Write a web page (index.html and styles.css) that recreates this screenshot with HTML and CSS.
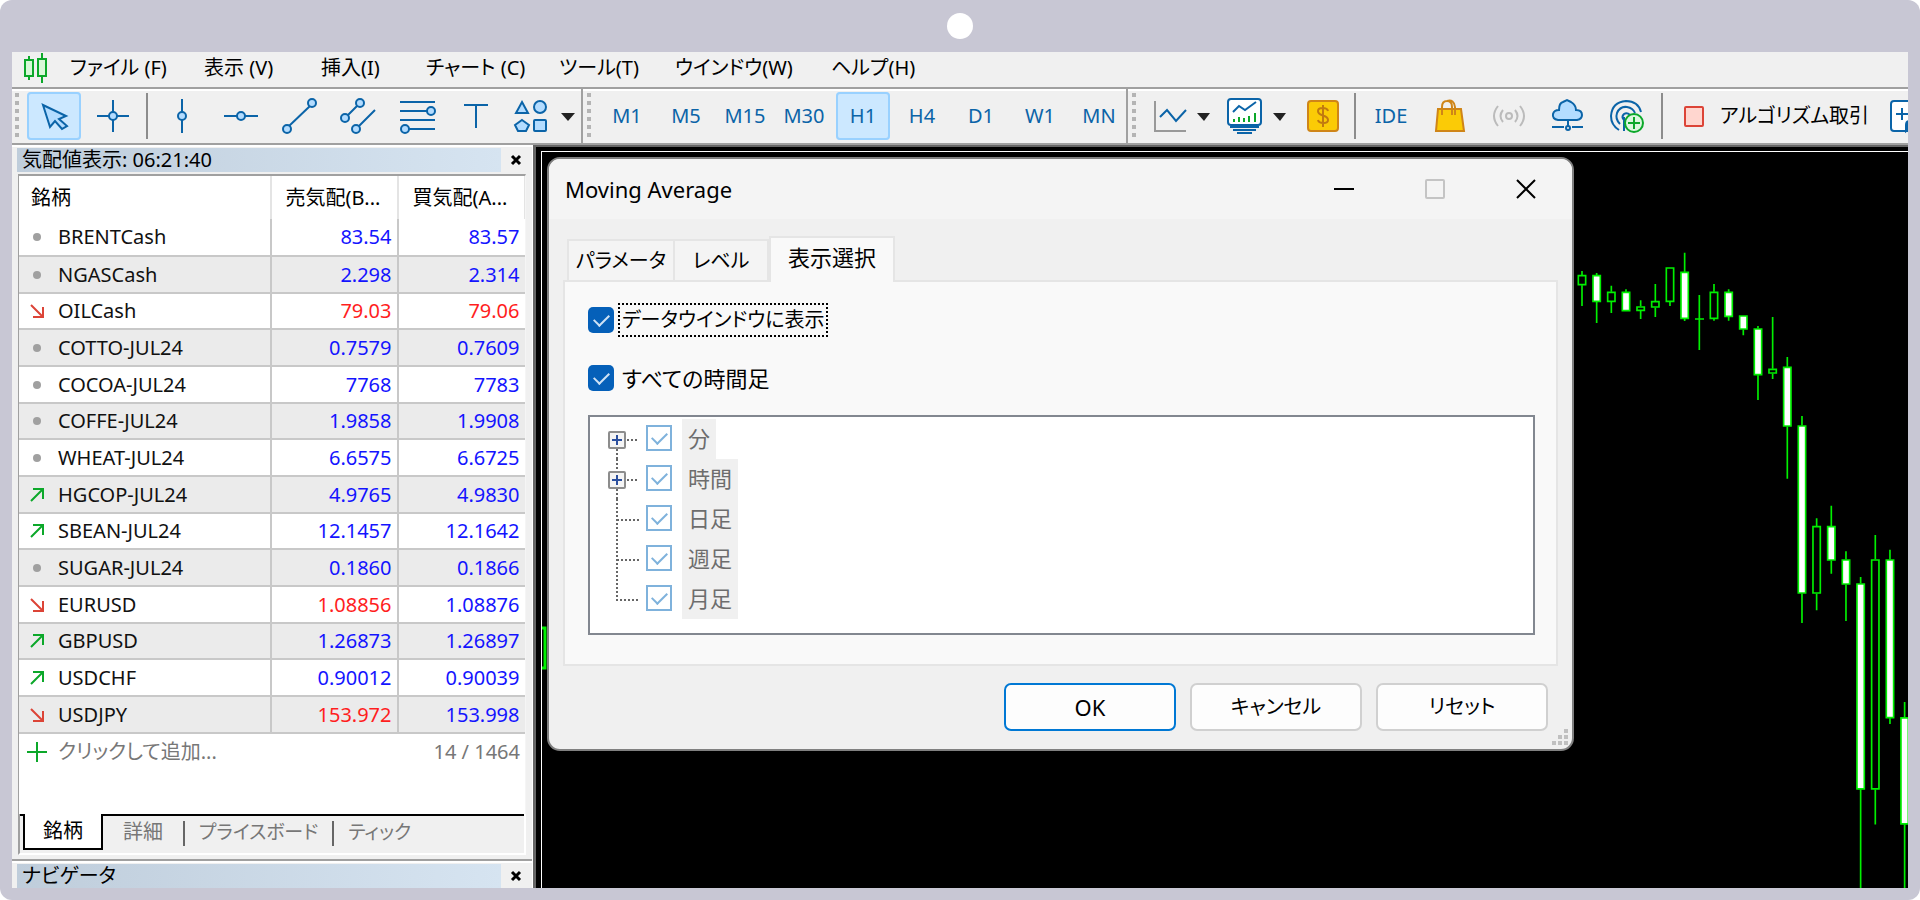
FILE: index.html
```html
<!DOCTYPE html>
<html lang="ja">
<head>
<meta charset="utf-8">
<title>Moving Average</title>
<link rel="stylesheet" href="styles.css">
</head>
<body>
<div class="device">
  <div class="camera-bar"><span class="camera"></span></div>
  <div class="app">
    <nav class="menubar">
      <svg class="logo" width="24" height="30" viewBox="0 0 24 30" fill="#d8f8d8" stroke="#0ca82a" stroke-width="2"><path d="M5 3v24M18 0v30"/><rect x="1" y="7" width="8" height="16"/><rect x="14" y="6" width="8" height="17"/></svg>
      <div class="menus">
        <button>ファイル (F)</button><button>表示 (V)</button><button>挿入(I)</button><button>チャート (C)</button><button>ツール(T)</button><button>ウインドウ(W)</button><button>ヘルプ(H)</button>
      </div>
    </nav>

    <div class="toolbar">
      <div class="group">
        <span class="handle"></span>
        <button class="tool active" aria-label="カーソル"><svg viewBox="0 0 54 48"><path class="fill" d="M16 13l23 11-7 3 8 7-5 3-7-8-5 6z"/></svg></button>
        <button class="tool" aria-label="十字線"><svg viewBox="0 0 54 48"><path d="M11 24h12M31 24h12M27 8v12M27 28v12"/><circle class="fill" cx="27" cy="24" r="4"/></svg></button>
        <span class="divider"></span>
        <button class="tool" aria-label="垂直線"><svg viewBox="0 0 54 48"><path d="M27 7v13M27 28v13"/><circle class="fill" cx="27" cy="24" r="4"/></svg></button>
        <button class="tool" aria-label="水平線"><svg viewBox="0 0 54 48"><path d="M10 24h13M31 24h13"/><circle class="fill" cx="27" cy="24" r="4"/></svg></button>
        <button class="tool" aria-label="トレンドライン"><svg viewBox="0 0 54 48"><path d="M16 34L37 14"/><circle class="fill" cx="14" cy="37" r="4"/><circle class="fill" cx="39" cy="11" r="4"/></svg></button>
        <button class="tool" aria-label="チャネル"><svg viewBox="0 0 54 48"><path d="M16 23L25 14M27 34L43 18"/><circle class="fill" cx="13" cy="26" r="4"/><circle class="fill" cx="28" cy="11" r="4"/><circle class="fill" cx="24" cy="37" r="4"/></svg></button>
        <button class="tool" aria-label="フィボナッチ"><svg viewBox="0 0 54 48"><path d="M9 10h35M9 19h27M9 28h35M18 37h26"/><circle class="fill" cx="40" cy="19" r="4"/><circle class="fill" cx="14" cy="37" r="4"/></svg></button>
        <button class="tool" aria-label="テキスト"><svg viewBox="0 0 54 48"><path d="M14 13h24M26 13v23"/></svg></button>
        <button class="tool" aria-label="図形"><svg viewBox="0 0 54 48"><path class="fill" d="M13 10l6 11H7zM13 28l7 5-3 6h-8l-3-6z"/><circle class="fill" cx="31" cy="15" r="6"/><rect class="fill" x="25" y="28" width="12" height="11" rx="1"/></svg></button>
        <button class="drop" aria-label="図形メニュー"><svg viewBox="0 0 14 48"><path d="M0 21h14l-7 8z"/></svg></button>
      </div>
      <div class="group">
        <span class="handle"></span>
        <button class="tool">M1</button><button class="tool">M5</button><button class="tool">M15</button><button class="tool">M30</button><button class="tool active">H1</button><button class="tool">H4</button><button class="tool">D1</button><button class="tool">W1</button><button class="tool">MN</button>
      </div>
      <div class="group last">
        <span class="handle"></span>
        <button class="tool" aria-label="ライン"><svg viewBox="0 0 54 48"><path stroke="#999" d="M14 9v30h31"/><path d="M19 25l7-7 9 11 10-11"/></svg></button>
        <button class="drop" aria-label="チャート種類"><svg viewBox="0 0 14 48"><path d="M1 21h13l-6 8z"/></svg></button>
        <button class="tool" aria-label="インディケータ"><svg viewBox="0 0 54 48"><rect x="11" y="7" width="33" height="26" rx="3" fill="#fff"/><path d="M13 35h29M16 38h23M20 41h15"/><path d="M16 20l6-6 6 4 11-8"/><path stroke="#0ca82a" d="M17 30v-3M22 30v-5M27 30v-4M32 30v-6M38 30v-9"/></svg></button>
        <button class="drop" aria-label="インディケータ一覧"><svg viewBox="0 0 14 48"><path d="M1 21h13l-6 8z"/></svg></button>
        <button class="tool" aria-label="注文"><svg viewBox="0 0 54 48"><rect x="15" y="9" width="30" height="30" rx="3" fill="#fbcb06" stroke="#cf8518"/><path stroke="#c17a10" d="M35 19c-1-4-10-4-10 0 0 6 10 3 10 9 0 4-9 4-10 0M30 13v22"/></svg></button>
        <span class="divider"></span>
        <button class="tool">IDE</button>
        <button class="tool" aria-label="マーケット"><svg viewBox="0 0 54 48"><path fill="#fbcb06" stroke="#cf8518" d="M15 17h23l3 22H13z"/><path stroke="#cf8518" d="M19 23V15q0-6 5-6t5 6v8M24 9q7-2 8 6v8"/></svg></button>
        <button class="tool" aria-label="シグナル"><svg viewBox="0 0 54 48"><g stroke="#bbb"><circle cx="27" cy="24" r="3"/><path d="M21 18q-5 6 0 12M33 18q5 6 0 12M16 14q-8 10 0 20M38 14q8 10 0 20"/></g></svg></button>
        <button class="tool" aria-label="VPS"><svg viewBox="0 0 54 48"><path class="fill" d="M17 28q-6-1-5-6 1-4 6-4 0-7 4-8l4-2 4 2q5 3 5 8 6 0 6 5 0 4-5 5z"/><path d="M27 28v7M11 35h12M31 35h11"/><circle cx="27" cy="36" r="2"/></svg></button>
        <button class="tool" aria-label="コミュニティ"><svg viewBox="0 0 54 48"><path d="M19 38q-8-5-8-14 1-14 15-15 12 0 15 11M20 32q-5-5-3-11 3-7 10-6 6 1 8 6M24 28q-3-3 0-6 3-2 6 1M24 25v14"/><circle cx="34" cy="31" r="9" stroke="#0ca82a" fill="#dcf7df"/><path stroke="#0ca82a" d="M28 31h12M34 25v12"/></svg></button>
        <span class="divider"></span>
        <button class="algo"><span class="stop"></span>アルゴリズム取引</button>
        <button class="tool" aria-label="新規注文"><svg viewBox="0 0 54 48"><path d="M30 39H14q-3 0-3-3V12q0-3 3-3h24v20z" fill="#fff"/><path d="M16 22h12M22 16v12"/><path d="M26 39V33q0-4 4-4h8z" fill="#0b64a8"/></svg></button>
      </div>
    </div>

    <div class="workspace">
      <aside class="sidebar">
        <section class="pane">
          <header class="pane-title"><h2>気配値表示: 06:21:40</h2><button aria-label="閉じる"><svg width="12" height="12" viewBox="0 0 12 12"><path d="M2 2l8 8M10 2l-8 8"/></svg></button></header>
          <div class="watch">
            <table>
              <colgroup><col class="c-name"><col class="c-num"><col class="c-num"></colgroup>
              <thead><tr><th>銘柄</th><th>売気配(B...</th><th>買気配(A...</th></tr></thead>
              <tbody>
                <tr><td><i class="dot"></i>BRENTCash</td><td>83.54</td><td>83.57</td></tr>
                <tr><td><i class="dot"></i>NGASCash</td><td>2.298</td><td>2.314</td></tr>
                <tr><td><svg class="down" viewBox="0 0 14 14"><path d="M1 1l11 11M13 3v10H3"/></svg>OILCash</td><td class="red">79.03</td><td class="red">79.06</td></tr>
                <tr><td><i class="dot"></i>COTTO-JUL24</td><td>0.7579</td><td>0.7609</td></tr>
                <tr><td><i class="dot"></i>COCOA-JUL24</td><td>7768</td><td>7783</td></tr>
                <tr><td><i class="dot"></i>COFFE-JUL24</td><td>1.9858</td><td>1.9908</td></tr>
                <tr><td><i class="dot"></i>WHEAT-JUL24</td><td>6.6575</td><td>6.6725</td></tr>
                <tr><td><svg class="up" viewBox="0 0 14 14"><path d="M1 13L12 2M3 1h10v10"/></svg>HGCOP-JUL24</td><td>4.9765</td><td>4.9830</td></tr>
                <tr><td><svg class="up" viewBox="0 0 14 14"><path d="M1 13L12 2M3 1h10v10"/></svg>SBEAN-JUL24</td><td>12.1457</td><td>12.1642</td></tr>
                <tr><td><i class="dot"></i>SUGAR-JUL24</td><td>0.1860</td><td>0.1866</td></tr>
                <tr><td><svg class="down" viewBox="0 0 14 14"><path d="M1 1l11 11M13 3v10H3"/></svg>EURUSD</td><td class="red">1.08856</td><td>1.08876</td></tr>
                <tr><td><svg class="up" viewBox="0 0 14 14"><path d="M1 13L12 2M3 1h10v10"/></svg>GBPUSD</td><td>1.26873</td><td>1.26897</td></tr>
                <tr><td><svg class="up" viewBox="0 0 14 14"><path d="M1 13L12 2M3 1h10v10"/></svg>USDCHF</td><td>0.90012</td><td>0.90039</td></tr>
                <tr><td><svg class="down" viewBox="0 0 14 14"><path d="M1 1l11 11M13 3v10H3"/></svg>USDJPY</td><td class="red">153.972</td><td>153.998</td></tr>
              </tbody>
            </table>
            <div class="add-row"><button><svg width="20" height="20" viewBox="0 0 20 20"><path d="M0 10h20M10 0v20"/></svg>クリックして追加...</button><span>14 / 1464</span></div>
          </div>
          <div class="pane-tabs"><button class="on">銘柄</button><button>詳細</button><button class="ruled">プライスボード</button><button class="ruled">ティック</button></div>
        </section>
        <section class="pane next">
          <header class="pane-title"><h2>ナビゲータ</h2><button aria-label="閉じる"><svg width="12" height="12" viewBox="0 0 12 12"><path d="M2 2l8 8M10 2l-8 8"/></svg></button></header>
        </section>
      </aside>

      <main class="chart">
        <div class="plot">
          <svg class="candles" fill="none" stroke="#00f000" stroke-width="5">
            <path stroke-width="3" d="M0 476h3v40h-3"/>
            <g transform="translate(1018 88) scale(.3333)">
              <path d="M66 93v12M66 136v62M110 99v6M110 186v63M154 137v18M154 186v33M198 148v7M242 181v18M242 213v24M286 132v51M286 203v28M330 186v12M374 38v57M374 237v6M418 165v165M462 132v23M462 237v5M506 148v7M506 231v11M550 269v17M594 258v7M594 406v74M638 231v155M638 401v16M682 351v29M682 560v156M726 528v28M726 1061v88M770 835v23M770 1061v50M814 797v61M814 962v39M858 934v24M858 1034v109M902 1011v19M902 1649v400M946 885v73M946 1649v105M990 929v29M990 1435v17M1034 1386v46M1034 1754v300"/>
              <path d="M55 107h22v27h-22zM143 157h22v27h-22zM231 201h22v10h-22zM275 185h22v16h-22zM319 84h22v100h-22zM405 237h27M451 157h22v78h-22zM627 388h22v11h-22zM759 860h22v199h-22zM935 960h22v687h-22z"/>
              <path fill="#fff" d="M99 107h22v77h-22zM187 157h22v55h-22zM363 97h22v138h-22zM495 157h22v72h-22zM539 228h22v39h-22zM583 267h22v137h-22zM671 382h22v176h-22zM715 558h22v501h-22zM803 860h22v100h-22zM847 960h22v72h-22zM891 1032h22v615h-22zM979 960h22v473h-22zM1023 1434h22v318h-22z"/>
            </g>
          </svg>

          <div class="dialog" role="dialog" aria-labelledby="dlg-title">
            <header class="dialog-title">
              <h1 id="dlg-title">Moving Average</h1>
              <div class="win-controls">
                <button aria-label="最小化"><svg viewBox="0 0 20 20"><path d="M0 10h20"/></svg></button>
                <button aria-label="最大化" disabled><svg viewBox="0 0 20 20"><rect x="1" y="1" width="18" height="18" rx="1"/></svg></button>
                <button aria-label="閉じる"><svg viewBox="0 0 20 20"><path d="M1 1l18 18M19 1L1 19"/></svg></button>
              </div>
            </header>
            <div class="dialog-body">
              <div class="tabs" role="tablist"><button role="tab">パラメータ</button><button role="tab">レベル</button><button role="tab" aria-selected="true" class="on">表示選択</button></div>
              <div class="tab-panel">
                <div class="check"><input type="checkbox" id="c1" checked><label for="c1" class="focus">データウインドウに表示</label></div>
                <div class="check"><input type="checkbox" id="c2" checked><label for="c2">すべての時間足</label></div>
                <ul class="tree">
                  <li><button class="branch" aria-label="分を展開"><svg viewBox="0 0 48 40"><path class="dots" d="M29 21h12M19 30v10"/><rect x="11" y="13" width="16" height="16" rx="1"/><path class="plus" d="M14 21h10M19 16v10"/></svg></button><input type="checkbox" id="t1" checked disabled><label for="t1">分</label></li>
                  <li><button class="branch" aria-label="時間を展開"><svg viewBox="0 0 48 40"><path class="dots" d="M29 21h12M19 0v11M19 30v10"/><rect x="11" y="13" width="16" height="16" rx="1"/><path class="plus" d="M14 21h10M19 16v10"/></svg></button><input type="checkbox" id="t2" checked disabled><label for="t2">時間</label></li>
                  <li><span class="branch"><svg viewBox="0 0 48 40"><path class="dots" d="M19 0v40M19 21h22"/></svg></span><input type="checkbox" id="t3" checked disabled><label for="t3">日足</label></li>
                  <li><span class="branch"><svg viewBox="0 0 48 40"><path class="dots" d="M19 0v40M19 21h22"/></svg></span><input type="checkbox" id="t4" checked disabled><label for="t4">週足</label></li>
                  <li><span class="branch"><svg viewBox="0 0 48 40"><path class="dots" d="M19 0v21h22"/></svg></span><input type="checkbox" id="t5" checked disabled><label for="t5">月足</label></li>
                </ul>
              </div>
              <footer class="actions"><button class="primary">OK</button><button>キャンセル</button><button>リセット</button></footer>
            </div>
            <svg class="grip" width="16" height="16" viewBox="0 0 16 16"><path d="M12 0h4v4h-4zM6 6h4v4H6zM12 6h4v4h-4zM0 12h4v4H0zM6 12h4v4H6zM12 12h4v4h-4z"/></svg>
          </div>
        </div>
      </main>
    </div>
  </div>
</div>
</body>
</html>
```
FILE: styles.css
```css
* { box-sizing: border-box; }
body {
  margin: 0;
  background: #fff;
  color: #000;
  font: 20px/24px "Noto Sans", "Noto Sans CJK JP", sans-serif;
  font-feature-settings: "palt";
}
button {
  padding: 0;
  border: 0;
  background: none;
  color: inherit;
  font: inherit;
  font-feature-settings: inherit;
  white-space: nowrap;
}
h1, h2 { margin: 0; font-size: 22px; font-weight: 400; }

.device {
  display: flex;
  flex-direction: column;
  height: 100vh;
  padding: 0 12px 12px;
  border-radius: 12px;
  background: #c8c7d4;
}
.camera-bar { display: flex; flex: 0 0 52px; align-items: center; justify-content: center; }
.camera { width: 26px; height: 26px; border-radius: 50%; background: #fff; }
.app { display: flex; flex: 1; flex-direction: column; min-height: 0; overflow: hidden; background: #f0f0f0; }

/* menu */
.menubar { display: flex; flex: 0 0 35px; align-items: center; padding: 0 0 4px 12px; }
.menus { display: grid; grid-template-columns: 134px 117px 105px 133px 116px 156px auto; margin-left: 22px; }
.menus button { text-align: left; }

/* toolbar */
.toolbar {
  display: flex;
  flex: 0 0 58px;
  border-top: 2px solid #a0a0a0;
  border-bottom: 2px solid #a0a0a0;
  box-shadow: inset 0 2px #fff;
  overflow: hidden;
  color: #0b64a8;
}
.group { display: flex; flex: none; align-items: center; gap: 5px; padding: 0 6px 0 3px; border-right: 2px solid #a0a0a0; }
.group + .group { padding: 0 0 0 4px; }
.group.last { flex: 1; min-width: 0; border: 0; }
.handle {
  flex: 0 0 4px;
  height: 46px;
  margin-right: 3px;
  background: repeating-linear-gradient(#b4b4b4 0 4px, transparent 4px 8px);
}
.group + .group .handle { margin-right: 4px; }
.group.last .handle { margin-right: 0; }
.tool { flex: 0 0 54px; height: 48px; border-radius: 4px; }
.tool.active { background: #cce8ff; box-shadow: inset 0 0 0 2px #99d1ff; }
.tool svg { display: block; width: 54px; height: 48px; fill: none; stroke: #0b64a8; stroke-width: 2; }
.fill { fill: #b3dcff; }
.divider { flex: 0 0 2px; height: 46px; margin: 0 2px 0 1px; background: #8c8c8c; }
.last .divider { margin: 0 3px 0 2px; }
.drop { flex: 0 0 14px; margin-left: -7px; }
.last .drop { margin: 0 2px 0 -4px; }
.drop svg { display: block; width: 14px; height: 48px; fill: #222; }
.algo { display: flex; flex: 0 0 204px; align-items: center; gap: 16px; padding-left: 13px; color: #000; }
.stop { width: 20px; height: 21px; border: 2px solid #dc4437; border-radius: 2px; background: #ffd6cf; }

/* workspace */
.workspace { display: flex; flex: 1; min-height: 0; }
.sidebar { display: flex; flex: 0 0 521px; flex-direction: column; border-right: 1px solid #fff; box-shadow: inset 0 2px #fff; }
.pane { padding: 3px 5px 0; }
.pane-title { display: grid; grid-template-columns: 1fr 26px; align-items: center; height: 24px; }
.pane-title h2 { padding: 0 5px; background: linear-gradient(90deg, #bfcddb, #d6e4f1); font-size: 20px; white-space: nowrap; }
.pane-title button { display: flex; justify-content: flex-end; padding-right: 5px; }
.pane-title path { stroke: #000; stroke-width: 3; }
.watch { height: 640px; margin: 2px 1px 0; border: solid #a0a0a0; border-width: 2px 0 0 1px; border-right: 1px solid #f5f5f5; background: #fff; }
table { width: 100%; table-layout: fixed; border-collapse: collapse; }
.c-num { width: 127px; }
th { height: 43px; padding: 0 0 0 12px; border-right: 2px solid #e4e4e4; font-weight: 400; text-align: left; white-space: nowrap; }
th + th { padding-left: 14px; }
th:last-child { border-right-width: 1px; }
td { height: 37px; padding: 0 5px 0 0; border-bottom: 2px solid #c8c8c8; color: #1414ff; text-align: right; }
tr:nth-child(3n) td { height: 36px; }
td + td { border-left: 2px solid #c8c8c8; }
td:first-child { padding-left: 10px; color: #111; text-align: left; }
tbody tr:nth-child(even) { background: #ebebeb; }
td.red { color: #ff1e1e; }
.dot { display: inline-block; width: 8px; height: 8px; margin: 0 17px 3px 4px; border-radius: 50%; background: #a0a0a0; }
.up, .down { width: 14px; height: 14px; margin: 0 14px 0 1px; fill: none; stroke: #0ca82a; stroke-width: 2; vertical-align: 0; }
.down { stroke: #dc4437; }
.add-row { display: flex; align-items: center; justify-content: space-between; height: 36px; padding: 0 5px 0 8px; color: #777; }
.add-row button { display: flex; align-items: center; gap: 11px; }
.add-row path { stroke: #0ca82a; stroke-width: 2; }
.pane-tabs { display: flex; height: 41px; margin: 0 1px; padding-left: 3px; border-left: 2px solid #a0a0a0; border-right: 2px solid #fff; border-bottom: 2px solid #fff; box-shadow: inset 0 2px #000; color: #777; }
.pane-tabs button { height: 36px; padding: 0 20px; }
.pane-tabs .on { padding: 0 18px; border: 2px solid #000; border-top: 0; background: #fff; color: #000; }
.pane-tabs .ruled { position: relative; padding: 0 14px 0 16px; font-size: 19px; }
.pane-tabs .ruled::before { content: ""; position: absolute; left: 0; top: 7px; width: 2px; height: 25px; background: #666; }
.next { flex: 1; margin-top: 4px; border-top: 2px solid #a0a0a0; box-shadow: inset 0 2px #fff; }

/* chart */
.chart { flex: 1; min-width: 0; padding: 4px 0 0 5px; border: solid #666; border-width: 2px 0 0 3px; background: #000; }
.plot { position: relative; height: 100%; border: solid #fff; border-width: 1px 0 0 1px; background: #000; }
.candles { position: absolute; left: 0; top: 0; width: 100%; height: 100%; }

/* dialog */
.dialog { position: absolute; left: 5px; top: 5px; width: 1027px; border: 2px solid #808080; border-radius: 13px; background: #f0f0f0; overflow: hidden; }
.dialog-title { display: flex; align-items: center; justify-content: space-between; height: 60px; padding: 0 36px 0 16px; background: #f4f4f4; }
.win-controls { display: flex; gap: 71px; }
.win-controls svg { display: block; width: 20px; height: 20px; fill: none; stroke: #000; stroke-width: 2; }
.win-controls button:disabled svg { stroke: #c4c4c4; }
.dialog-body { padding: 17px 14px 18px; }
.tabs { display: flex; align-items: flex-end; padding-left: 4px; }
.tabs button { width: 108px; height: 41px; border: 2px solid #e5e5e5; border-bottom: 0; background: #f4f4f4; }
.tabs button + button { width: 94px; border-left: 0; }
.tabs button.on { width: 126px; height: 46px; margin-bottom: -2px; padding-bottom: 6px; border-left: 2px solid #e5e5e5; background: #f9f9f9; font-size: 22px; z-index: 1; }
.tab-panel { padding: 21px 21px 29px 23px; border: 2px solid #e5e5e5; background: #f9f9f9; }
.check { display: flex; align-items: center; gap: 4px; height: 34px; margin-bottom: 24px; }
.check label { padding: 0 2px; border: 2px solid transparent; font-size: 22px; line-height: 30px; }
.check .focus { border: 2px dotted #000; font-size: 20px; }
input[type="checkbox"] { display: grid; place-items: center; flex: none; appearance: none; width: 26px; height: 26px; margin: 0; border-radius: 5px; background: #0560b9; }
input[type="checkbox"]::before { content: ""; width: 13px; height: 7px; margin-bottom: 4px; border: solid #cfe2f5; border-width: 0 0 2px 2px; transform: rotate(-45deg); }
.tree { height: 220px; margin: -4px 0 0; padding: 2px 0 0 8px; border: 2px solid #828790; background: #fff; list-style: none; }
.tree li { display: flex; height: 40px; }
.branch, .branch svg { display: block; width: 48px; height: 40px; }
.branch svg { fill: #f4f4f4; stroke: #8c8c8c; stroke-width: 2; }
.branch .dots { fill: none; stroke: #666; stroke-dasharray: 2 2; }
.branch .plus { stroke: #2b4f9e; }
.tree input[type="checkbox"] { margin: 6px 10px 0 0; border: 2px solid #7fb2dc; border-radius: 0; background: #fff; }
.tree input[type="checkbox"]::before { border-color: #7fb2dc; }
.tree label { padding: 0 6px; background: #f0f0f0; color: #6d6d6d; font-size: 22px; line-height: 38px; }
.actions { display: flex; justify-content: flex-end; gap: 14px; padding: 17px 10px 0 0; }
.actions button { width: 172px; height: 48px; border: 2px solid #d0d0d0; border-radius: 7px; background: #fdfdfd; }
.actions .primary { border-color: #0078d4; font-size: 22px; }
.grip { position: absolute; right: 4px; bottom: 4px; fill: #c0c0c0; }
```
